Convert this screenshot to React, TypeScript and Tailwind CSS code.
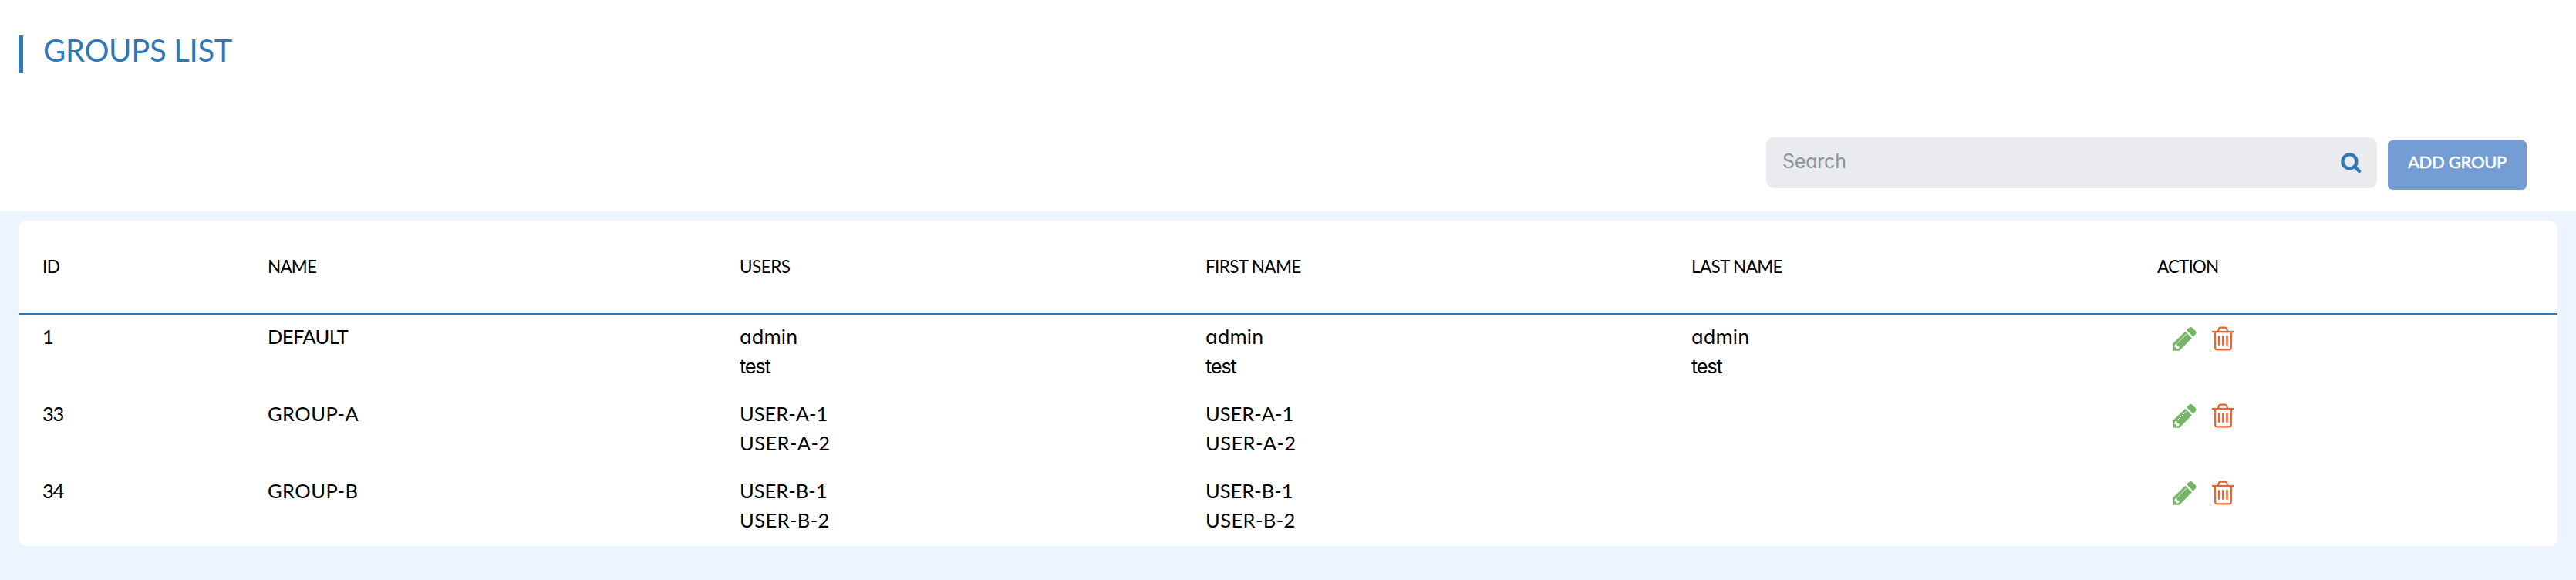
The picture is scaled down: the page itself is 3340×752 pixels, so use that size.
import React from "react";

type Entry = { text: string; className: string };
type Group = { id: Entry; name: Entry; users: Entry[]; firstNames: Entry[]; lastNames: Entry[] };

const admin: Entry = { text: "admin", className: "mt-px -mb-px font-['Inter',sans-serif] tracking-[0.1px]" };
const test: Entry = { text: "test", className: "mt-px -mb-px font-['Inter',sans-serif] tracking-[-1.3px]" };
const first = (text: string): Entry => ({ text, className: "tracking-[0px]" });
const second = (text: string): Entry => ({ text, className: "tracking-[0.4px]" });

const groups: Group[] = [
  {
    id: { text: "1", className: "" },
    name: { text: "DEFAULT", className: "tracking-[-0.6px]" },
    users: [admin, test],
    firstNames: [admin, test],
    lastNames: [admin, test],
  },
  {
    id: { text: "33", className: "tracking-[-1.2px]" },
    name: { text: "GROUP-A", className: "tracking-[0.45px]" },
    users: [first("USER-A-1"), second("USER-A-2")],
    firstNames: [first("USER-A-1"), second("USER-A-2")],
    lastNames: [],
  },
  {
    id: { text: "34", className: "tracking-[-1.2px]" },
    name: { text: "GROUP-B", className: "tracking-[0.45px]" },
    users: [first("USER-B-1"), second("USER-B-2")],
    firstNames: [first("USER-B-1"), second("USER-B-2")],
    lastNames: [],
  },
];

const headers: Entry[] = [
  { text: "ID", className: "tracking-[-0.6px]" },
  { text: "NAME", className: "tracking-[-0.8px]" },
  { text: "USERS", className: "tracking-[-0.5px]" },
  { text: "FIRST NAME", className: "tracking-[-0.65px]" },
  { text: "LAST NAME", className: "tracking-[-0.65px]" },
  { text: "ACTION", className: "-ml-px tracking-[-0.9px]" },
];

const columns = "grid grid-cols-[292px_612px_604px_630px_605px_1fr] pl-[31px]";

function SearchIcon() {
  return (
    <svg className="mt-[3px] h-[27px] w-[27px]" viewBox="0 0 27 27" fill="none" stroke="#3178b2" strokeWidth="4.4" strokeLinecap="round">
      <circle cx="11.4" cy="11.4" r="9" />
      <path d="M18.5 18.5L24 24" />
    </svg>
  );
}

function PencilIcon() {
  return (
    <svg className="h-[31px] w-[31px]" viewBox="0 0 31 31">
      <path fill="#74b566" d="M18 4.1L21 1.1Q23.3 -1 25.6 1.1L29.6 5.1Q31.6 7.4 29.6 9.6L26.5 12.7ZM16.3 5.7L24.9 14.3L8.8 30.7H0V21.7Z" />
      <path stroke="#fff" strokeWidth="1" strokeLinecap="round" d="M6.8 20.2L17.4 9.4" />
      <path fill="#fff" d="M3 22.4L5.4 21.9L6 24.7L8.6 25.6L8.3 28L5 28.5L4.6 26.6L2.3 25.7Z" />
    </svg>
  );
}

function TrashIcon() {
  return (
    <svg className="h-8 w-7" viewBox="0 0 28 32" fill="none" stroke="#f0622c">
      <path strokeWidth="2.3" d="M0 7H28" />
      <path strokeWidth="2.2" d="M7.9 7L8.7 3.7Q9.3 1.7 11.3 1.7H16.7Q18.7 1.7 19.3 3.7L20.1 7M3.8 7L4.2 28Q4.3 30.3 6.7 30.3H22.3Q24.7 30.3 24.8 28L25.2 7" />
      <path strokeWidth="2.5" d="M9.1 12.3V24.7M14.3 12.3V24.7M19.5 12.3V24.7" />
    </svg>
  );
}

function Lines({ entries }: { entries: Entry[] }) {
  return (
    <div className="flex flex-col">
      {entries.map((e) => (
        <span key={e.text} className={e.className}>{e.text}</span>
      ))}
    </div>
  );
}

export default function App() {
  return (
    <div className="flex h-[752px] w-full flex-col bg-[#ecf5ff] font-['Lato',sans-serif] text-black [font-feature-settings:'cv11']">
      <header className="flex h-[274px] flex-col bg-white pt-[46px]">
        <div className="ml-6 flex h-12 items-start border-l-[6px] border-[#3178b2] pl-[26px]">
          <h1 className="text-[40px] leading-[39px] tracking-[-0.3px] text-[#3178b2]">GROUPS LIST</h1>
        </div>
        <div className="mt-[84px] flex items-start justify-end gap-[14px] pr-16">
          <div className="flex h-[66px] w-[792px] items-center justify-between rounded-[10px] bg-[#eaebef] pr-5 pb-[3px] pl-[21px]">
            <span className="font-['Inter',sans-serif] text-[25px] tracking-[-0.2px] text-[#8a929a]">Search</span>
            <SearchIcon />
          </div>
          <button className="mt-1 flex h-16 w-[180px] items-center justify-center rounded-[6px] bg-[#739dd3] pb-[9px] text-[22px] tracking-[-0.3px] whitespace-nowrap text-white [-webkit-text-stroke:0.6px_white]">
            ADD GROUP
          </button>
        </div>
      </header>
      <main className="mx-6 mt-3 h-[422px] rounded-[10px] bg-white">
        <div className={`${columns} h-[122px] items-center border-b-2 border-[#3178b2] pb-px text-[22.5px]`}>
          {headers.map((h) => (
            <span key={h.text} className={h.className}>{h.text}</span>
          ))}
        </div>
        {groups.map((g) => (
          <div key={g.id.text} className={`${columns} h-[100px] pt-[9px] text-[25.5px] leading-[38px]`}>
            <Lines entries={[g.id]} />
            <Lines entries={[g.name]} />
            <Lines entries={g.users} />
            <Lines entries={g.firstNames} />
            <Lines entries={g.lastNames} />
            <div className="flex items-start gap-5 pt-[6px] pl-[19px]">
              <div className="pt-px"><PencilIcon /></div>
              <TrashIcon />
            </div>
          </div>
        ))}
      </main>
    </div>
  );
}
